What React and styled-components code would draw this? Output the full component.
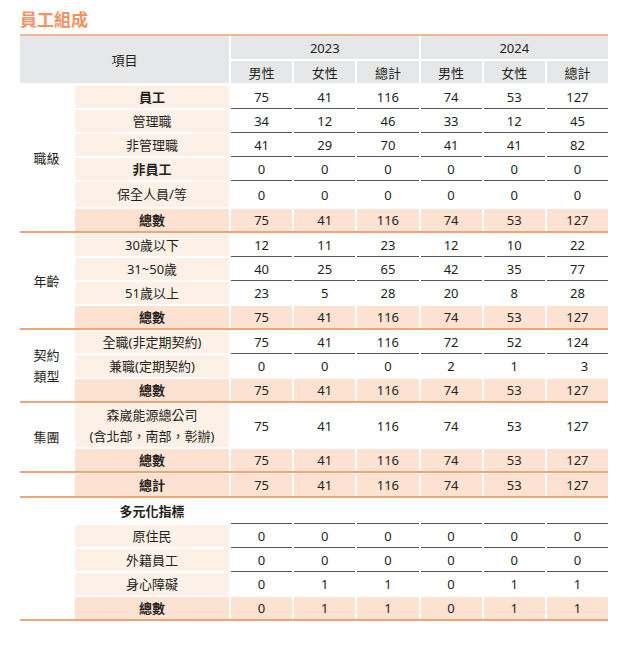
import styled, { createGlobalStyle } from 'styled-components';

const GlobalStyle = createGlobalStyle`
  body {
    margin: 0;
    background: #ffffff;
    font-family: "Noto Sans", "Noto Sans CJK TC", sans-serif;
    color: #231f20;
  }
`;

const Page = styled.div`
  padding: 8px 0 0 20px;
  width: 588px;
`;

const Title = styled.h1`
  margin: 0 0 2px;
  font-size: 17px;
  line-height: 24px;
  font-weight: 700;
  color: #f3935f;
`;

const Table = styled.div`
  border-top: 2px solid #f8b593;
  font-size: 13px;
`;

const Head = styled.div`
  display: grid;
  grid-template-columns: 209px repeat(6, 1fr);
  grid-template-rows: 23px 22px;
  gap: 2px;
`;

const HeadCell = styled.div`
  background: #e6e7e8;
  display: flex;
  align-items: center;
  justify-content: center;
  grid-column: span ${p => p.$span || 1};
  grid-row: span ${p => p.$rows || 1};
`;

const Group = styled.div`
  display: flex;
  padding-top: ${p => (p.$first ? 3 : 1)}px;
  border-bottom: 2px solid #f5a374;
`;

const GroupLabel = styled.div`
  width: 53px;
  flex: none;
  display: flex;
  flex-direction: column;
  align-items: center;
  justify-content: center;
  line-height: 21px;
`;

const Rows = styled.div`
  flex: 1;
  margin-left: 2px;
  display: flex;
  flex-direction: column;
  gap: 2px;
`;

const Row = styled.div`
  display: grid;
  grid-template-columns: 154px repeat(6, 1fr);
  column-gap: 2px;
  height: ${p => p.$h || 22}px;
`;

const itemBg = { plain: '#ffffff', light: '#fdf0e7', total: '#fde1d1' };

const ItemCell = styled.div`
  background: ${p => itemBg[p.$tone]};
  font-weight: ${p => (p.$bold ? 700 : 400)};
  display: flex;
  flex-direction: column;
  align-items: center;
  justify-content: center;
  line-height: 21px;
`;

const NumCell = styled.div`
  background: ${p => (p.$total ? '#fde1d1' : '#ffffff')};
  box-shadow: ${p => (p.$line ? '0 1px 0 #555555' : 'none')};
  display: flex;
  align-items: center;
  justify-content: center;
  padding-left: ${p => (p.$shift ? 14 : 0)}px;
`;

const all = [75, 41, 116, 74, 53, 127];
const zeros = [0, 0, 0, 0, 0, 0];

const groups = [
  {
    label: ['職級'],
    rows: [
      { name: ['員工'], bold: true, vals: all, line: true },
      { name: ['管理職'], vals: [34, 12, 46, 33, 12, 45], line: true },
      { name: ['非管理職'], vals: [41, 29, 70, 41, 41, 82], line: true },
      { name: ['非員工'], bold: true, vals: zeros, line: true },
      { name: ['保全人員/等'], vals: zeros, h: 25 },
      { name: ['總數'], total: true, vals: all },
    ],
  },
  {
    label: ['年齡'],
    rows: [
      { name: ['30歲以下'], vals: [12, 11, 23, 12, 10, 22], line: true },
      { name: ['31~50歲'], vals: [40, 25, 65, 42, 35, 77], line: true },
      { name: ['51歲以上'], vals: [23, 5, 28, 20, 8, 28] },
      { name: ['總數'], total: true, vals: all },
    ],
  },
  {
    label: ['契約', '類型'],
    rows: [
      { name: ['全職(非定期契約)'], vals: [75, 41, 116, 72, 52, 124], line: true },
      { name: ['兼職(定期契約)'], vals: [0, 0, 0, 2, 1, 3], shiftLast: true },
      { name: ['總數'], total: true, vals: all },
    ],
  },
  {
    label: ['集團'],
    rows: [
      { name: ['森崴能源總公司', '(含北部，南部，彰辦)'], vals: all, h: 43 },
      { name: ['總數'], total: true, vals: all },
    ],
  },
  {
    label: [],
    rows: [{ name: ['總計'], total: true, vals: all }],
  },
  {
    label: [],
    rows: [
      { name: ['多元化指標'], bold: true, plain: true, vals: ['', '', '', '', '', ''], line: true, h: 24 },
      { name: ['原住民'], vals: zeros, line: true },
      { name: ['外籍員工'], vals: zeros, line: true },
      { name: ['身心障礙'], vals: [0, 1, 1, 0, 1, 1] },
      { name: ['總數'], total: true, vals: [0, 1, 1, 0, 1, 1] },
    ],
  },
];

function App() {
  return (
    <Page>
      <GlobalStyle />
      <Title>員工組成</Title>
      <Table>
        <Head>
          <HeadCell $rows={2}>項目</HeadCell>
          <HeadCell $span={3}>2023</HeadCell>
          <HeadCell $span={3}>2024</HeadCell>
          {['男性', '女性', '總計', '男性', '女性', '總計'].map((t, i) => (
            <HeadCell key={i}>{t}</HeadCell>
          ))}
        </Head>
        {groups.map((g, gi) => (
          <Group key={gi} $first={gi === 0}>
            <GroupLabel>
              {g.label.map(l => <span key={l}>{l}</span>)}
            </GroupLabel>
            <Rows>
              {g.rows.map((r, ri) => (
                <Row key={ri} $h={r.h}>
                  <ItemCell
                    $tone={r.plain ? 'plain' : r.total ? 'total' : 'light'}
                    $bold={r.bold || r.total}
                  >
                    {r.name.map(n => <span key={n}>{n}</span>)}
                  </ItemCell>
                  {r.vals.map((v, vi) => (
                    <NumCell
                      key={vi}
                      $total={r.total}
                      $line={r.line}
                      $shift={r.shiftLast && vi === 5}
                    >
                      {v}
                    </NumCell>
                  ))}
                </Row>
              ))}
            </Rows>
          </Group>
        ))}
      </Table>
    </Page>
  );
}

export default App;
